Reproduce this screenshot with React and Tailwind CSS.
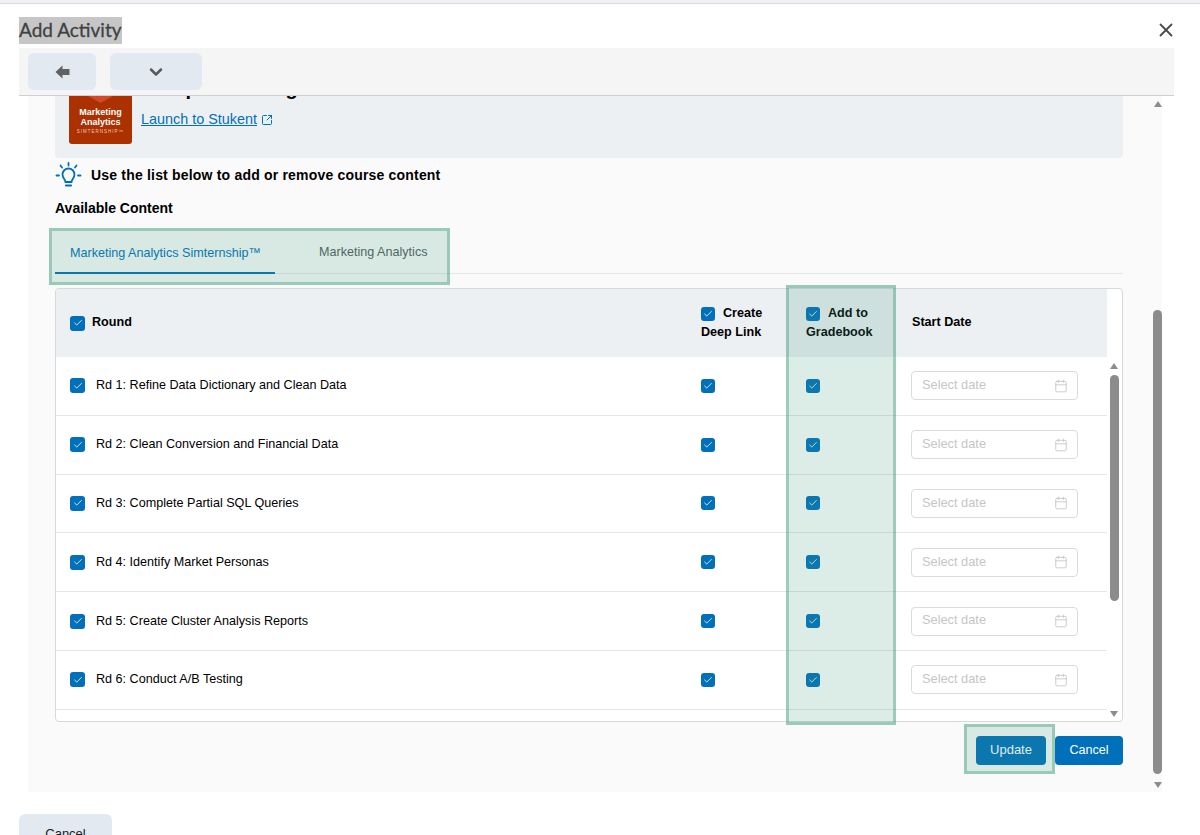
import React from "react";
import { X, ChevronDown, SquareArrowOutUpRight, Check, Calendar } from "lucide-react";

const rounds = [
  "Rd 1: Refine Data Dictionary and Clean Data",
  "Rd 2: Clean Conversion and Financial Data",
  "Rd 3: Complete Partial SQL Queries",
  "Rd 4: Identify Market Personas",
  "Rd 5: Create Cluster Analysis Reports",
  "Rd 6: Conduct A/B Testing",
];

const Checkbox = ({ small = false }) => (
  <span
    className={`flex shrink-0 items-center justify-center rounded-[3px] bg-[#0070ba] ${
      small ? "h-[14px] w-[14px]" : "h-[15px] w-[15px]"
    }`}
  >
    <Check className="h-[10px] w-[10px] text-white" strokeWidth={2} />
  </span>
);

const Arrow = ({ down = false }) => (
  <span
    className={`block h-0 w-0 border-x-[4.5px] border-x-transparent ${
      down ? "border-t-[6px] border-t-[#8c8c8c]" : "border-b-[6px] border-b-[#8c8c8c]"
    }`}
  />
);

const Highlight = ({ className }) => (
  <div className={`pointer-events-none absolute border-[3px] border-[#3c9a78]/40 bg-[#3c9a78]/[0.18] ${className}`} />
);

const BackIcon = () => (
  <svg width="15" height="14" viewBox="0 0 15 14" fill="#5f6264">
    <path d="M7.5 0.5 L0.5 7 L7.5 13.5 V10 H14.5 V4 H7.5 Z" />
  </svg>
);

const BulbIcon = () => (
  <svg width="27" height="26" viewBox="0 0 27 26" fill="none" stroke="#0070ba" strokeWidth="1.8" strokeLinecap="round">
    <path d="M13.5 1 V3.5 M5.5 3.5 L7 5.5 M21.5 3.5 L20 5.5 M1.5 13.5 H4 M23 13.5 H25.5" />
    <path d="M10.5 20 C10.5 17.5 7.5 16 7.5 12.5 A6 6 0 0 1 19.5 12.5 C19.5 16 16.5 17.5 16.5 20 Z" />
    <path d="M11 23.5 H16" strokeWidth="2.2" />
  </svg>
);

const LogoTip = () => (
  <svg className="absolute left-0 top-0" width="63" height="8" viewBox="0 0 63 8">
    <path d="M19 0 H44 L31.5 7 Z" fill="#d1492a" />
  </svg>
);

export default function App() {
  return (
    <div className="relative h-[835px] w-[1200px] overflow-hidden bg-white font-['Liberation_Sans',sans-serif] text-black">
      <div className="h-[4px] border-b border-[#d7dae0] bg-[#f0f1f4]" />

      {/* Заголовок */}
      <div className="flex h-[44px] items-start justify-between pl-[19px] pr-[23px] pt-[13px]">
        <h1 className="h-[27px] bg-[#c6c6c6] font-['Lato',sans-serif] text-[19px] leading-[25px] text-[#3f4244] [-webkit-text-stroke:0.3px_#3f4244]">
          Add Activity
        </h1>
        <X className="mt-[2px] h-[22px] w-[22px] text-[#494c4e]" strokeWidth={2} />
      </div>

      {/* Панель кнопок */}
      <div className="ml-[19px] flex h-[48px] w-[1155px] gap-[14px] border-b border-[#cfcfcf] bg-[#f5f5f5] pl-[9px] pt-[5px]">
        <button className="flex h-[37px] w-[68px] items-center justify-center rounded-[6px] bg-[#e3e9f1]">
          <BackIcon />
        </button>
        <button className="flex h-[37px] w-[92px] items-center justify-center rounded-[6px] bg-[#e3e9f1]">
          <ChevronDown className="h-[20px] w-[20px] text-[#565a5c]" strokeWidth={3} />
        </button>
      </div>

      <div className="ml-[28px] flex h-[696px] w-[1134px] bg-[#fafafa]">
        <div className="w-[1125px] pl-[27px] pr-[30px]">
          {/* Карточка курса */}
          <div className="relative flex h-[62px] w-[1068px] overflow-hidden rounded-b-[4px] bg-[#edf0f3] pl-[14px]">
            <div className="relative flex h-[48px] w-[63px] flex-col items-center justify-start rounded-b-[3px] bg-[#ab3100] pt-[12px] text-white">
              <LogoTip />
              <span className="text-[9px] font-bold leading-[9.5px]">Marketing</span>
              <span className="text-[9px] font-bold leading-[9.5px]">Analytics</span>
              <span className="mt-[2px] text-[4.5px] leading-[6px] tracking-[1px] text-[#eec9b8]">SIMTERNSHIP™</span>
            </div>
            <div className="ml-[9px]">
              <p className="-mt-[20px] h-[24px] text-[20px] font-bold leading-[24px] whitespace-nowrap">Comp Marketing</p>
              <a className="mt-[9px] flex items-center gap-[4px] text-[14.4px] leading-[20px] text-[#0070ba]">
                <span className="underline">Launch to Stukent</span>
                <SquareArrowOutUpRight className="mt-[2px] h-[12px] w-[12px]" strokeWidth={2} />
              </a>
            </div>
          </div>

          <div className="mt-[4px] flex h-[26px] items-center gap-[9px]">
            <BulbIcon />
            <p className="text-[14px] font-bold tracking-[0.19px]">Use the list below to add or remove course content</p>
          </div>
          <p className="mt-[10px] text-[14px] font-bold leading-[20px]">Available Content</p>

          {/* Вкладки */}
          <div className="mt-[13px] flex h-[43px] w-[1068px] border-b border-[#e4e6e9]">
            <div className="flex h-[43px] w-[220px] items-center border-b-2 border-[#0070ba] pl-[15px] pt-[3px] text-[12.6px] text-[#0070ba]">
              Marketing Analytics Simternship™
            </div>
            <div className="flex h-[42px] items-center pl-[44px] pt-[1px] text-[12.6px] text-[#565a5c]">Marketing Analytics</div>
          </div>

          {/* Таблица */}
          <div className="mt-[14px] flex h-[434px] w-[1068px] flex-col overflow-hidden rounded-[4px] border border-[#d5d8dc] bg-white">
            <div className="flex h-[68px] w-[1051px] shrink-0 items-center bg-[#edf0f3] text-[12.6px] font-bold leading-[19px]">
              <div className="flex w-[645px] items-center gap-[7px] pl-[14px]">
                <Checkbox />
                <span className="-mt-[2px]">Round</span>
              </div>
              <div className="w-[105px]">
                <div className="flex items-center gap-[8px]">
                  <Checkbox small />
                  Create
                </div>
                Deep Link
              </div>
              <div className="w-[106px]">
                <div className="flex items-center gap-[8px]">
                  <Checkbox small />
                  Add to
                </div>
                Gradebook
              </div>
              <div className="-mt-[2px]">Start Date</div>
            </div>

            <div className="relative min-h-0 flex-1">
              {rounds.map((r) => (
                <div key={r} className="flex h-[58.8px] w-[1051px] items-center border-b border-[#e4e6e9] text-[12.6px]">
                  <div className="flex w-[645px] items-center gap-[11px] pl-[14px]">
                    <Checkbox />
                    {r}
                  </div>
                  <div className="w-[105px]">
                    <Checkbox small />
                  </div>
                  <div className="w-[105px]">
                    <Checkbox small />
                  </div>
                  <div className="flex h-[29px] w-[167px] items-center justify-between rounded-[4px] border border-[#d9dbde] bg-white pl-[10px] pr-[9px] text-[12.8px] text-[#c4c6c8]">
                    <span className="-mt-[2px]">Select date</span>
                    <Calendar className="h-[14px] w-[14px] text-[#c4c6c8]" strokeWidth={1.5} />
                  </div>
                </div>
              ))}
              {/* Внутренний скролл */}
              <div className="absolute bottom-0 right-[3px] top-0 flex w-[10px] flex-col items-center pt-[6px]">
                <Arrow />
                <div className="mt-[6px] h-[226px] w-[9px] rounded-full bg-[#8c8c8c]" />
                <div className="mt-auto mb-[4px]">
                  <Arrow down />
                </div>
              </div>
            </div>
          </div>

          <div className="mt-[14px] flex w-[1068px] justify-end gap-[9px]">
            <button className="h-[29px] w-[70px] rounded-[4px] bg-[#0070ba] pb-[2px] text-[13px] text-white">Update</button>
            <button className="h-[29px] w-[68px] rounded-[4px] bg-[#0070ba] pb-[1px] text-[12.6px] text-white">Cancel</button>
          </div>
        </div>

        {/* Внешний скролл */}
        <div className="flex h-full w-[9px] flex-col items-center pt-[5px]">
          <Arrow />
          <div className="mt-[203px] h-[464px] w-[9px] shrink-0 rounded-full bg-[#8c8c8c]" />
          <div className="mt-[8px]">
            <Arrow down />
          </div>
        </div>
      </div>

      <button className="ml-[19px] mt-[22px] h-[40px] w-[93px] rounded-[6px] bg-[#e3e9f1] text-[13px] text-[#202122]">
        Cancel
      </button>

      <Highlight className="left-[49px] top-[228px] h-[57px] w-[401px]" />
      <Highlight className="left-[786px] top-[285px] h-[440px] w-[110px]" />
      <Highlight className="left-[964px] top-[724px] h-[50px] w-[91px]" />
    </div>
  );
}
